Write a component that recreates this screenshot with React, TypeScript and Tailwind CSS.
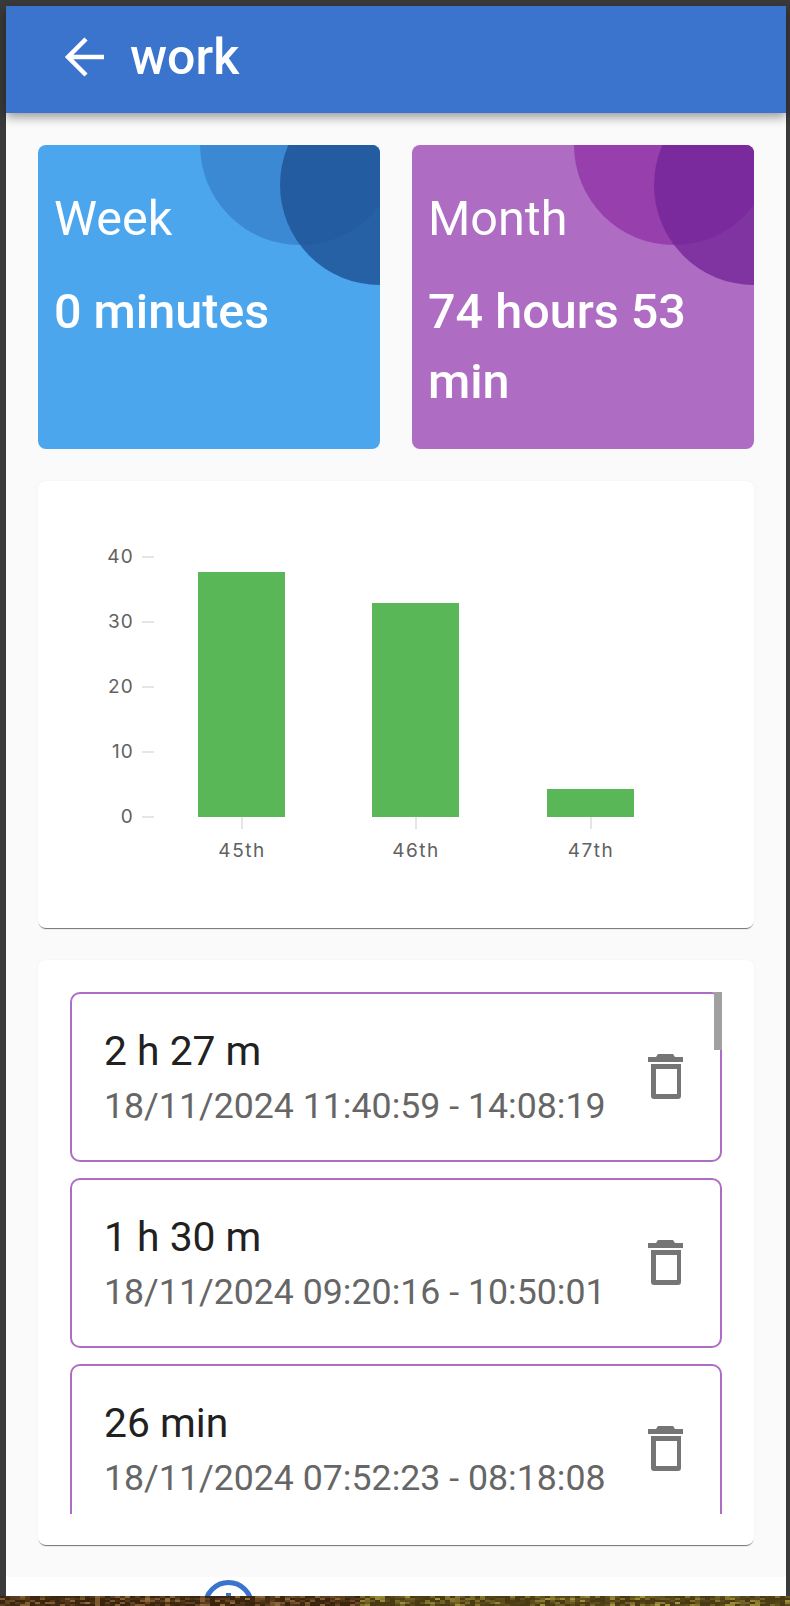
const font = "font-['Roboto',sans-serif]"

const sessions = [
  { total: "2 h 27 m", range: "18/11/2024 11:40:59 - 14:08:19" },
  { total: "1 h 30 m", range: "18/11/2024 09:20:16 - 10:50:01" },
  { total: "26 min", range: "18/11/2024 07:52:23 - 08:18:08" },
]

const TrashIcon = () => (
  <svg width="35" height="45" viewBox="0 0 35 45" className="mb-[1px] shrink-0">
    <path d="M10 0h15l2 3h8v5H0V3h8z" fill="#757575" />
    <path d="M3 10h30v32a3 3 0 0 1-3 3H6a3 3 0 0 1-3-3zM8 15v25h21V15z" fill="#757575" fillRule="evenodd" />
  </svg>
)

const StatCard = ({ label, value, bg, c1, c2 }: { label: string; value: string; bg: string; c1: string; c2: string }) => (
  <div className={`relative h-[304px] flex-1 overflow-hidden rounded-[8px] ${bg} px-[16px] pt-[46px] text-white`}>
    <div className={`absolute left-[162px] top-[-100px] size-[200px] rounded-full ${c1}`} />
    <div className={`absolute left-[242px] top-[-60px] size-[200px] rounded-full ${c2}`} />
    <div className="relative">
      <div className="text-[48.5px] leading-[56px]">{label}</div>
      <div className="mt-[30px] text-[48.5px] leading-[70px] font-medium">{value}</div>
    </div>
  </div>
)

const Chart = () => {
  const ys = [
    { t: "40", y: 557 },
    { t: "30", y: 622 },
    { t: "20", y: 687 },
    { t: "10", y: 752 },
    { t: "0", y: 817 },
  ]
  const bars = [
    { t: "45th", x: 198, top: 572 },
    { t: "46th", x: 372, top: 603 },
    { t: "47th", x: 547, top: 789 },
  ]
  return (
    <svg width="716" height="447" viewBox="38 481 716 447">
      {ys.map((r) => (
        <g key={r.t}>
          <line x1="142" x2="154" y1={r.y} y2={r.y} stroke="#dddddd" strokeWidth="1.5" />
          <text x="134" y={r.y + 6} textAnchor="end" fontSize="19" letterSpacing="1.2" fill="#616161" fontFamily="Inter, sans-serif">{r.t}</text>
        </g>
      ))}
      {bars.map((b) => (
        <g key={b.t}>
          <rect x={b.x} y={b.top} width="87" height={817 - b.top} fill="#5ab758" />
          <line x1={b.x + 44} x2={b.x + 44} y1="817" y2="829" stroke="#dddddd" strokeWidth="1.5" />
          <text x={b.x + 44} y="857" textAnchor="middle" fontSize="19" letterSpacing="1.5" fill="#616161" fontFamily="Inter, sans-serif">{b.t}</text>
        </g>
      ))}
    </svg>
  )
}

// speckled strip of the wallpaper showing under the window
const Wallpaper = () => {
  const cells = []
  let seed = 7
  const rnd = () => {
    seed = (seed * 16807) % 2147483647
    return seed / 2147483647
  }
  for (let x = 0; x < 790; x += 5) {
    for (let y = 0; y < 10; y += 2) {
      const t = x / 790
      const light = rnd()
      const base = t < 0.45 ? [58, 36, 14] : [74, 58, 20]
      const hi = t < 0.45 ? [150, 110, 60] : [165, 150, 60]
      const k = light * light * light
      const c = base.map((v, i) => Math.round(v + (hi[i] - v) * k))
      cells.push(<rect key={`${x}-${y}`} x={x} y={y} width="5" height="2" fill={`rgb(${c.join(",")})`} />)
    }
  }
  return (
    <svg width="790" height="10" viewBox="0 0 790 10" className="block shrink-0">
      <g className="blur-[0.6px]">{cells}</g>
    </svg>
  )
}

export default function App() {
  return (
    <div className={`${font} flex h-[1606px] w-[790px] flex-col overflow-hidden bg-[#3a3a3a]`}>
      <div className="ml-[6px] mr-[4px] mt-[6px] flex h-[1590px] flex-col bg-white">
        <header className="z-10 flex h-[107px] shrink-0 items-center gap-[26px] bg-[#3a74cd] pb-[5px] pl-[58px] text-white shadow-[0_4px_10px_rgba(0,0,0,0.4)]">
          <svg width="40" height="40" viewBox="0 0 40 40" fill="none" stroke="white" strokeWidth="4.5">
            <path d="M40 20H4M22 2 4 20l18 18" />
          </svg>
          <h1 className="text-[50px] leading-none font-medium">work</h1>
        </header>

        <main className="flex h-[1464px] shrink-0 flex-col gap-[32px] bg-[#fafafa] px-[32px] pt-[32px]">
          <div className="flex gap-[32px]">
            <StatCard label="Week" value="0 minutes" bg="bg-[#4ba6ee]" c1="bg-[#3c89d3]" c2="bg-[#1f5596]/85" />
            <StatCard label="Month" value="74 hours 53 min" bg="bg-[#ae6dc3]" c1="bg-[#973fac]" c2="bg-[#74259a]/80" />
          </div>

          <section className="h-[447px] shrink-0 rounded-[8px] bg-white shadow-[0_2px_1px_-1px_rgba(0,0,0,0.55),0_0_2px_rgba(0,0,0,0.05)]">
            <Chart />
          </section>

          <section className="h-[585px] shrink-0 rounded-[8px] bg-white px-[32px] pt-[32px] shadow-[0_2px_1px_-1px_rgba(0,0,0,0.55),0_0_2px_rgba(0,0,0,0.05)]">
            <div className="relative h-[522px] overflow-hidden">
              <div className="absolute right-0 top-0 h-[58px] w-[8px] bg-[#a0a0a0]" />
              <div className="flex flex-col gap-[16px]">
                {sessions.map((s) => (
                  <div key={s.range} className="flex h-[170px] shrink-0 items-center justify-between rounded-[10px] border-2 border-[#ae6dc3] pl-[32px] pr-[37px]">
                    <div className="pt-[3px]">
                      <div className="text-[40.8px] leading-[48px] text-[#212121]">{s.total}</div>
                      <div className="mt-[7px] text-[35.7px] leading-[48px] text-[#666666]">{s.range}</div>
                    </div>
                    <TrashIcon />
                  </div>
                ))}
              </div>
            </div>
          </section>
        </main>

        <div className="flex h-[19px] overflow-hidden bg-white pl-[197px] pt-[3px]">
          <svg width="51" height="51" viewBox="0 0 51 51" fill="none" className="shrink-0">
            <circle cx="25.5" cy="25.5" r="23" stroke="#3a74cd" strokeWidth="5" />
            <path d="M25.5 13v12" stroke="#3a74cd" strokeWidth="5" />
          </svg>
        </div>
      </div>
      <Wallpaper />
    </div>
  )
}
